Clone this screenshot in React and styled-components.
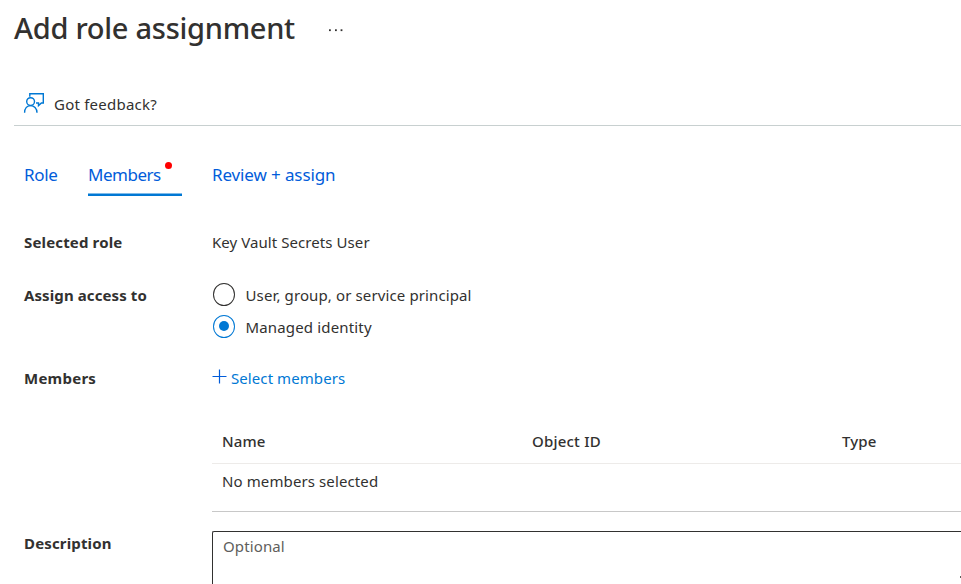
import React from 'react';
import styled, { createGlobalStyle } from 'styled-components';

const GlobalStyle = createGlobalStyle`
  * { box-sizing: border-box; }
  html, body { margin: 0; background: #fff; overflow: hidden; }
  body {
    font-family: "Noto Sans", "Open Sans", sans-serif;
    font-size: 15px;
    font-weight: 400;
    line-height: 20px;
    color: #323130;
  }
`;

const Page = styled.main`
  width: 100%;
  height: 584px;
  overflow: hidden;
  padding: 8px 0 0 14px;
`;

const Header = styled.header`
  display: flex;
  height: 40px;
`;

const Title = styled.h1`
  width: 314px;
  margin: 0;
  font-size: 29px;
  font-weight: 500;
  line-height: 40px;
  letter-spacing: -0.27px;
  white-space: nowrap;
`;

const MoreIcon = styled.svg`
  width: 16px;
  height: 4px;
  margin-top: 20px;
  fill: #323130;
`;

const CommandBar = styled.div`
  display: flex;
  height: 41px;
  margin-top: 37px;
  padding-left: 9px;
  border-bottom: 1px solid #c8d0d0;
`;

const Feedback = styled.span`
  margin: 9px 0 0 8px;
  letter-spacing: 0.23px;
`;

const FeedbackIcon = styled.svg`
  width: 23px;
  height: 22px;
  margin-top: 7px;
  fill: none;
  stroke: #0078d4;
  stroke-width: 1.4;
`;

const Tabs = styled.nav`
  display: flex;
  gap: 30px;
  height: 34px;
  margin: 36px 0 0 10px;
`;

const Tab = styled.a`
  position: relative;
  width: ${(p) => p.$width}px;
  height: 34px;
  color: #015cda;
  font-size: 17px;
  line-height: 25px;
  letter-spacing: ${(p) => p.$spacing}px;
  white-space: nowrap;
  box-shadow: ${(p) => (p.$active ? 'inset 0 -2px #0078d4, inset 0 -3px #7fbbe9' : 'none')};
`;

const Alert = styled.i`
  position: absolute;
  top: 0;
  right: 10px;
  width: 7px;
  height: 7px;
  border-radius: 50%;
  background: #f00;
`;

const Row = styled.section`
  display: grid;
  grid-template-columns: 188px 1fr;
  padding-left: 10px;
  margin-top: ${(p) => p.$gap}px;
`;

const Label = styled.div`
  font-weight: 700;
  letter-spacing: ${(p) => p.$spacing ?? 0.15}px;
`;

const Value = styled.div`
  letter-spacing: 0.07px;
`;

const Options = styled.div`
  display: grid;
  row-gap: 12px;
`;

const Option = styled.label`
  display: flex;
  align-items: center;
  height: 20px;
  letter-spacing: ${(p) => p.$spacing}px;
`;

const Radio = styled.span`
  display: grid;
  place-items: center;
  width: 22px;
  height: 23px;
  margin: -2px 10.5px 0 1px;
  border: 1px solid ${(p) => (p.$checked ? '#0078d4' : '#323130')};
  border-radius: 50%;

  &::after {
    content: "";
    width: 10px;
    height: 10px;
    border-radius: 50%;
    background: ${(p) => (p.$checked ? '#0078d4' : 'transparent')};
  }
`;

const SelectLink = styled.a`
  display: flex;
  color: #0078d4;
  letter-spacing: 0.08px;
`;

const PlusIcon = styled.svg`
  width: 15px;
  height: 15px;
  margin: 1px 4px 0 0;
  stroke: #015cda;
  stroke-width: 1.2;
`;

const Table = styled.div`
  margin: 37px 0 0 198px;
  border-bottom: 1px solid #c8c8c8;
`;

const TableHead = styled.div`
  display: grid;
  grid-template-columns: 310px 310px 1fr;
  height: 39px;
  padding: 6px 0 0 10px;
  border-bottom: 1px solid #edebe9;
  font-weight: 500;
`;

const HeadCell = styled.span`
  letter-spacing: ${(p) => p.$spacing}px;
`;

const TableEmpty = styled.div`
  height: 47px;
  padding: 7px 0 0 10px;
  letter-spacing: 0.11px;
`;

const TextBox = styled.div`
  position: relative;
  height: 70px;
  margin-top: -2px;
  padding: 4px 10px;
  border: 1px solid #323130;
  border-right: 0;
  border-radius: 2px 0 0 0;
  color: #605e5c;
  letter-spacing: 0.12px;
`;

const ResizeMark = styled.i`
  position: absolute;
  right: 0;
  top: 44px;
  width: 1px;
  height: 2px;
  background: #605e5c;
`;

export default function App() {
  return (
    <>
      <GlobalStyle />
      <Page>
        <Header>
          <Title>Add role assignment</Title>
          <MoreIcon viewBox="0 0 16 4">
            <rect x="1" y="1.3" width="1.8" height="1.8" />
            <rect x="7" y="1.3" width="1.8" height="1.8" />
            <rect x="12.6" y="1.3" width="1.8" height="1.8" />
          </MoreIcon>
        </Header>
        <CommandBar>
          <FeedbackIcon viewBox="0 0 23 22">
            <path d="M6.8 4.8V1.8H20.3V11H18.4L15.5 13.6V11H13" />
            <circle cx="7.6" cy="9.6" r="3.9" />
            <path d="M1.6 20.8C1.6 16.4 4.2 13.6 7.6 13.6S14 16.4 14 20.8" />
          </FeedbackIcon>
          <Feedback>Got feedback?</Feedback>
        </CommandBar>
        <Tabs>
          <Tab $width={34} $spacing={-0.3}>Role</Tab>
          <Tab $width={94} $spacing={-0.48} $active>
            Members
            <Alert />
          </Tab>
          <Tab $width={126} $spacing={-0.12}>Review + assign</Tab>
        </Tabs>
        <Row $gap={36}>
          <Label>Selected role</Label>
          <Value>Key Vault Secrets User</Value>
        </Row>
        <Row $gap={33}>
          <Label $spacing={0.1}>Assign access to</Label>
          <Options>
            <Option $spacing={0.12}>
              <Radio />
              User, group, or service principal
            </Option>
            <Option $spacing={0.16}>
              <Radio $checked />
              Managed identity
            </Option>
          </Options>
        </Row>
        <Row $gap={31}>
          <Label $spacing={0.25}>Members</Label>
          <SelectLink>
            <PlusIcon viewBox="0 0 15 15">
              <path d="M7.5 0.5V14.5M0.5 7.5H14.5" />
            </PlusIcon>
            Select members
          </SelectLink>
        </Row>
        <Table>
          <TableHead>
            <HeadCell $spacing={0.1}>Name</HeadCell>
            <HeadCell $spacing={0.2}>Object ID</HeadCell>
            <HeadCell $spacing={0.1}>Type</HeadCell>
          </TableHead>
          <TableEmpty>No members selected</TableEmpty>
        </Table>
        <Row $gap={21}>
          <Label $spacing={0.15}>Description</Label>
          <TextBox>
            Optional
            <ResizeMark />
          </TextBox>
        </Row>
      </Page>
    </>
  );
}
